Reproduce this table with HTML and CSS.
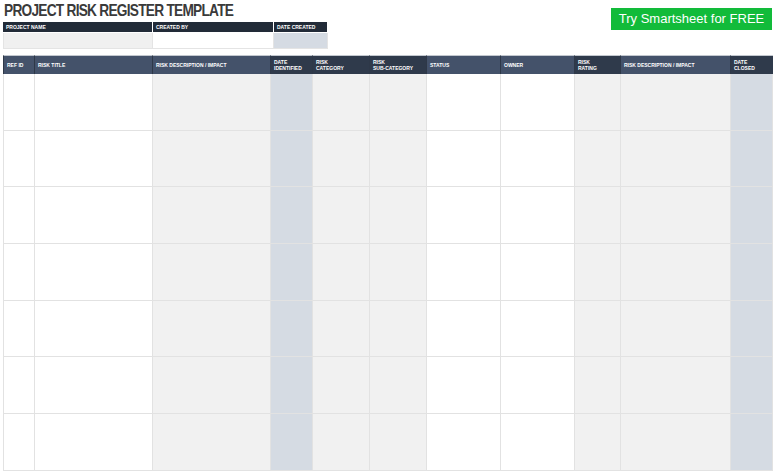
FILE: index.html
```html
<!DOCTYPE html>
<html>
<head>
<meta charset="utf-8">
<link rel="stylesheet" href="styles.css">
</head>
<body>
<div class="top">
  <div class="left">
    <h1 class="title">PROJECT RISK REGISTER TEMPLATE</h1>
    <div class="info">
      <div class="ih">PROJECT NAME</div>
      <div class="ih">CREATED BY</div>
      <div class="ih">DATE CREATED</div>
      <div class="id gray"></div>
      <div class="id white"></div>
      <div class="id blue"></div>
    </div>
  </div>
  <div class="btn">Try Smartsheet for FREE</div>
</div>
<div class="grid">
  <div class="h l">REF ID</div>
  <div class="h l">RISK TITLE</div>
  <div class="h l">RISK DESCRIPTION / IMPACT</div>
  <div class="h d">DATE<br>IDENTIFIED</div>
  <div class="h d">RISK<br>CATEGORY</div>
  <div class="h d">RISK<br>SUB-CATEGORY</div>
  <div class="h l">STATUS</div>
  <div class="h l">OWNER</div>
  <div class="h d">RISK<br>RATING</div>
  <div class="h l">RISK DESCRIPTION / IMPACT</div>
  <div class="h d last">DATE<br>CLOSED</div>

  <div class="c w"></div><div class="c w"></div><div class="c g"></div><div class="c b"></div><div class="c g"></div><div class="c g"></div><div class="c w"></div><div class="c w"></div><div class="c g"></div><div class="c g"></div><div class="c b last"></div>
  <div class="c w"></div><div class="c w"></div><div class="c g"></div><div class="c b"></div><div class="c g"></div><div class="c g"></div><div class="c w"></div><div class="c w"></div><div class="c g"></div><div class="c g"></div><div class="c b last"></div>
  <div class="c w"></div><div class="c w"></div><div class="c g"></div><div class="c b"></div><div class="c g"></div><div class="c g"></div><div class="c w"></div><div class="c w"></div><div class="c g"></div><div class="c g"></div><div class="c b last"></div>
  <div class="c w"></div><div class="c w"></div><div class="c g"></div><div class="c b"></div><div class="c g"></div><div class="c g"></div><div class="c w"></div><div class="c w"></div><div class="c g"></div><div class="c g"></div><div class="c b last"></div>
  <div class="c w"></div><div class="c w"></div><div class="c g"></div><div class="c b"></div><div class="c g"></div><div class="c g"></div><div class="c w"></div><div class="c w"></div><div class="c g"></div><div class="c g"></div><div class="c b last"></div>
  <div class="c w"></div><div class="c w"></div><div class="c g"></div><div class="c b"></div><div class="c g"></div><div class="c g"></div><div class="c w"></div><div class="c w"></div><div class="c g"></div><div class="c g"></div><div class="c b last"></div>
  <div class="c w"></div><div class="c w"></div><div class="c g"></div><div class="c b"></div><div class="c g"></div><div class="c g"></div><div class="c w"></div><div class="c w"></div><div class="c g"></div><div class="c g"></div><div class="c b last"></div>
</div>
</body>
</html>
```
FILE: styles.css
```css
html, body { margin: 0; padding: 0; background: #fff; }
body { font-family: "Liberation Sans", Arial, sans-serif; width: 776px; height: 474px; overflow: hidden; }
.top { display: flex; justify-content: space-between; align-items: flex-start; padding: 0 4px 0 3px; height: 55px; }
.left { display: flex; flex-direction: column; }
.title { margin: 0 0 0 1px; font-size: 16.5px; line-height: 20px; font-weight: bold; color: #3a3a3a; letter-spacing: -0.9px; transform: scaleX(0.83); transform-origin: left; white-space: nowrap; height: 22px; }
.info { display: grid; grid-template-columns: 150px 121px 54px; grid-template-rows: 10px 16px; row-gap: 1px; }
.ih { background: #222b38; color: #fff; font-size: 5px; font-weight: bold; line-height: 10px; padding-left: 3px; border-right: 1px solid #fff; }
.id { border-bottom: 1px solid #e4e4e4; border-right: 1px solid #e4e4e4; }
.id.gray { background: #f0f0f0; border-left: 1px solid #e4e4e4; }
.id.white { background: #fff; }
.id.blue { background: #d5dbe3; }
.btn { margin-top: 8px; width: 161px; height: 22px; background: #12bb3a; color: #fff; font-size: 13px; line-height: 22px; text-align: center; }
.grid { margin-left: 3px; display: grid; width: 770px; grid-template-columns: 31px 118px 118px 42px 57px 57px 74px 74px 46px 110px 43px; grid-template-rows: 19px repeat(7, 56.7px); }
.h { color: #fff; font-size: 5px; font-weight: bold; line-height: 6px; padding-left: 3px; display: flex; align-items: center; border-left: 1px solid #2e3848; border-top: 1px solid #c3c8cf; }
.h.l { background: #44526a; }
.h.d { background: #2f3a4b; }
.c { border-left: 1px solid #e2e2e2; border-bottom: 1px solid #e2e2e2; }
.c.last { border-right: 1px solid #e2e2e2; }
.c.w { background: #fff; }
.c.g { background: #f1f1f1; }
.c.b { background: #d5dbe3; }
```
